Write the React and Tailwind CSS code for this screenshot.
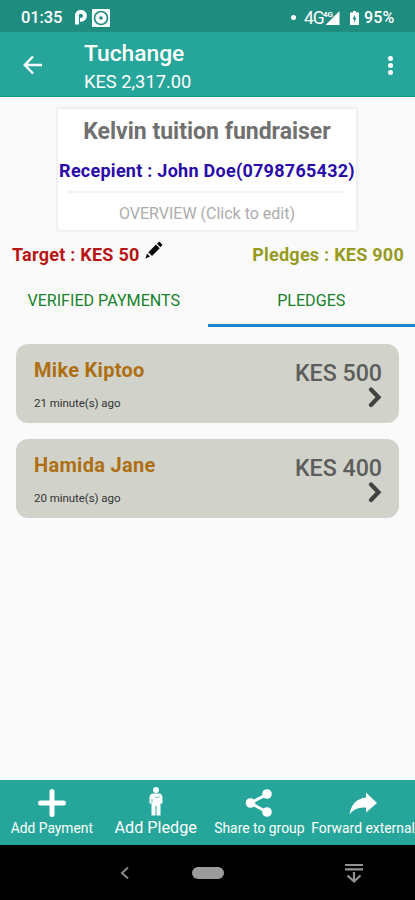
import React from 'react';

function StatusBar() {
  return (
    <div className="flex h-8 items-center bg-[#1f8c80] pt-[3px] text-white">
      <span className="ml-[21px] w-[54px] text-[16.5px] font-medium leading-8 tracking-[-0.1px]">01:35</span>
      <svg className="h-4 w-3" viewBox="0 0 12 16">
        <path d="M2 14.500V6.500A4 4 0 1 1 6 9.800H5" fill="none" stroke="#fff" strokeWidth="4" />
      </svg>
      <svg className="ml-[5px] h-[18px] w-[18px]" viewBox="0 0 18 18">
        <rect width="18" height="18" rx="1" fill="#fff" />
        <circle cx="9" cy="9" r="6.500" fill="none" stroke="#1f8c80" strokeWidth="1.700" />
        <circle cx="9" cy="9" r="1.800" fill="#1f8c80" />
      </svg>
      <i className="ml-[181px] h-[5px] w-[5px] rounded-full bg-white" />
      <span className="ml-[8px] w-[19px] text-[17.500px] leading-8 tracking-[-1px]">4G</span>
      <svg className="h-4 w-[17px]" viewBox="0 0 17 16">
        <path d="M16.500 1v14H2.500z" fill="#fff" />
        <text x="0" y="7" fill="#fff" stroke="#1f8c80" strokeWidth="1" paintOrder="stroke" className="font-['Roboto',sans-serif] text-[8px] font-bold">4G</text>
      </svg>
      <svg className="ml-[10px] h-4 w-[9px]" viewBox="0 0 9 16">
        <path d="M3 1h3v1.500h3V15H0V2.500h3z" fill="#fff" />
        <path d="M5 4.500 2.500 9H4v3.500L6.500 8H5z" fill="#1f8c80" />
      </svg>
      <span className="ml-[5px] text-[16px] font-medium leading-8 tracking-[0.1px]">95%</span>
    </div>
  );
}

function Header() {
  return (
    <header className="flex h-[65px] items-center border-b border-[#16968a] bg-[#26a69a] text-white">
      <svg className="ml-[23px] mt-[2px] h-5 w-5" viewBox="0 0 20 20" fill="none" stroke="#fff" strokeWidth="2.400">
        <path d="M19 10H2M10 1.500 1.800 10l8.200 8.500" />
      </svg>
      <div className="ml-[41px] flex-1 pt-[7px]">
        <div className="text-[22.800px] font-medium leading-[28px]">Tuchange</div>
        <div className="text-[18.300px] leading-[27px]">KES 2,317.00</div>
      </div>
      <div className="mr-[22px] mt-[2px] flex flex-col gap-[2px]">
        <i className="h-[5px] w-[5px] rounded-full bg-white" />
        <i className="h-[5px] w-[5px] rounded-full bg-white" />
        <i className="h-[5px] w-[5px] rounded-full bg-white" />
      </div>
    </header>
  );
}

function Summary() {
  return (
    <section className="ml-[58px] mt-3 flex h-[121px] w-[298px] flex-col items-center whitespace-nowrap bg-white shadow-[0_0_3px_1px_#e6e6e6]">
      <h1 className="mt-[8px] text-[23px] font-bold leading-[30px] text-[#707070]">Kelvin tuition fundraiser</h1>
      <p className="mt-[9px] text-[18px] font-bold leading-[30px] tracking-[0.260px] text-[#2a0aa8]">Recepient : John Doe(0798765432)</p>
      <div className="mt-[5px] h-[2px] w-[278px] bg-[#f3f3f3]" />
      <p className="mt-[7px] text-[16px] leading-[28px] text-[#acacac]">OVERVIEW (Click to edit)</p>
    </section>
  );
}

function Pledge({ name, time, amount }) {
  return (
    <article className="mx-4 flex h-[79px] justify-between rounded-xl bg-[#d1d3cb] pl-[18px] pr-[17px]">
      <div>
        <h2 className="mt-[12px] text-[20px] font-bold leading-[28px] tracking-[0.300px] text-[#ae6f12]">{name}</h2>
        <p className="mt-[8px] text-[11.500px] leading-[22px] tracking-[-0.05px] text-[#333]">{time}</p>
      </div>
      <div className="flex flex-col items-end">
        <b className="mt-[14px] text-[23.200px] font-medium leading-[30px] text-[#5d5e5a]">{amount}</b>
        <svg className="-mt-px h-[22px] w-[14px]" viewBox="0 0 14 22">
          <path d="M3 2.500 10.500 10.200 3 18" fill="none" stroke="#424340" strokeWidth="4.200" strokeLinecap="round" />
        </svg>
      </div>
    </article>
  );
}

function Actions() {
  return (
    <footer className="grid h-[65px] grid-cols-4 whitespace-nowrap bg-[#26a69a] text-white">
      <div className="flex flex-col items-center pt-[9px]">
        <svg className="h-7 w-7" viewBox="0 0 28 28"><path d="M14 2.500v23M2.500 14h23" stroke="#fff" strokeWidth="5" strokeLinecap="round" /></svg>
        <span className="text-[13.800px] leading-[23px]">Add Payment</span>
      </div>
      <div className="flex flex-col items-center pt-[7px]">
        <svg className="h-[29px] w-[14px]" viewBox="0 0 14 29">
          <circle cx="7" cy="3" r="3" fill="#fff" />
          <path d="M4 6.500h6q3 0 3.500 4v6h-2v12H7.500V19H6.500v9.500H2.500v-12h-2v-6Q1 6.500 4 6.500z" fill="#fff" />
          <path d="M3 12v4M6 9.500 8 11l2.500-1.500" fill="none" stroke="#26a69a" strokeWidth=".7" />
        </svg>
        <span className="text-[16.200px] leading-[24px]">Add Pledge</span>
      </div>
      <div className="flex flex-col items-center pt-[9px]">
        <svg className="h-7 w-7" viewBox="0 0 28 28">
          <path d="M22.500 5 5.500 14l17 9.500" fill="none" stroke="#fff" strokeWidth="2.800" />
          <circle cx="22" cy="5" r="4.800" fill="#fff" />
          <circle cx="5.500" cy="14" r="4.800" fill="#fff" />
          <circle cx="22" cy="23" r="4.800" fill="#fff" />
        </svg>
        <span className="text-[13.900px] leading-[23px]">Share to group</span>
      </div>
      <div className="flex flex-col items-center pt-[9px]">
        <svg className="h-7 w-7" viewBox="0 0 28 28">
          <path d="M17 3.500 28 14 17 23.500V18.500Q6 17.500.500 25.500 3 10 17 8.500z" fill="#fff" />
        </svg>
        <span className="text-[13.900px] leading-[23px]">Forward external</span>
      </div>
    </footer>
  );
}

function NavBar() {
  return (
    <nav className="flex h-[55px] items-center bg-black">
      <svg className="ml-[120px] h-3 w-[9px]" viewBox="0 0 9 12"><path d="M8 .500 2 6l6 5.500" fill="none" stroke="#8c8c8c" strokeWidth="1.900" /></svg>
      <i className="ml-[63px] h-3 w-8 rounded-full bg-[#9b9b9b]" />
      <svg className="ml-[121px] h-5 w-[18px]" viewBox="0 0 18 20" fill="none" stroke="#929292" strokeWidth="2.200">
        <path d="M0 2h18M0 6.300h18M9 9v9M2.500 12.500l6.500 6 6.500-6" />
      </svg>
    </nav>
  );
}

export default function App() {
  return (
    <main className="flex h-[900px] w-[415px] flex-col overflow-hidden bg-[#fafafa] font-['Roboto',sans-serif]">
      <StatusBar />
      <Header />
      <Summary />
      <div className="mt-[10px] flex h-[30px] items-center px-3 text-[18px] font-bold leading-[30px] tracking-[0.250px]">
        <span className="w-[133px] whitespace-nowrap text-[#b81515]">Target : KES 50</span>
        <svg className="mb-[10px] h-[18px] w-[18px]" viewBox="0 0 18 18">
          <path d="M.500 17.500l1.500-5L5 15.500zM3.300 11.300 11 3.600 14.700 7.300 7 15zM12 2.700 14.200.500 17.500 3.800 15.400 6.200z" fill="#090909" />
        </svg>
        <span className="-mr-px ml-auto text-[#969b20]">Pledges : KES 900</span>
      </div>
      <div className="grid h-[57px] grid-cols-2 text-center text-[16.100px] leading-[61px] text-[#16812c]">
        <span>VERIFIED PAYMENTS</span>
        <span className="h-[57px] border-b-[3px] border-[#1c86d1]">PLEDGES</span>
      </div>
      <div className="mt-[17px] flex flex-1 flex-col gap-4">
        <Pledge name="Mike Kiptoo" time="21 minute(s) ago" amount="KES 500" />
        <Pledge name="Hamida Jane" time="20 minute(s) ago" amount="KES 400" />
      </div>
      <Actions />
      <NavBar />
    </main>
  );
}
